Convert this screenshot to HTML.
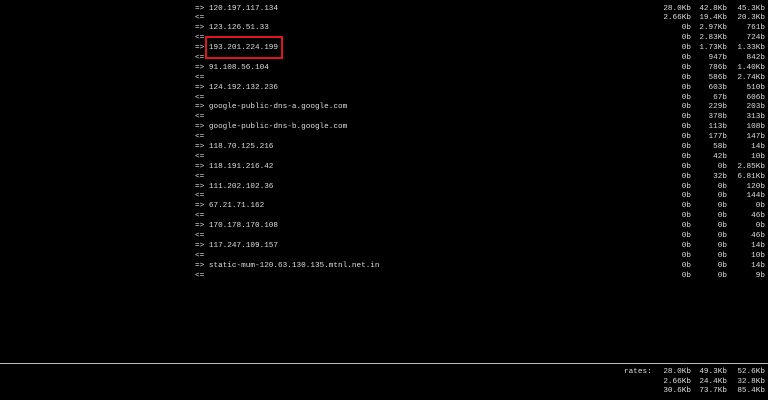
<!DOCTYPE html><html><head><style>
body{margin:0;width:768px;height:400px;background:#000;overflow:hidden;font-family:"Liberation Mono",monospace;font-size:7.7px;color:#dcdcdc;position:relative}
.r{position:absolute;left:0;width:768px;height:10px;line-height:10px;white-space:pre}
.h{position:absolute;left:195px}
.c{position:absolute;text-align:right;width:40px}
.a{left:651px}.b{left:687px}.d{left:725px}
</style></head><body>
<div id="x"></div>
<div style="position:absolute;left:0;top:363px;width:768px;height:1px;background:#bbb"></div>
<div style="position:absolute;left:205px;top:36px;width:74px;height:19px;border:2px solid #e0141c"></div>
<div class="r" style="top:367px"><span class="h" style="left:624px">rates:</span><span class="c a">28.0Kb</span><span class="c b">49.3Kb</span><span class="c d">52.6Kb</span></div>
<div class="r" style="top:377px"><span class="c a">2.66Kb</span><span class="c b">24.4Kb</span><span class="c d">32.8Kb</span></div>
<div class="r" style="top:386px"><span class="c a">30.6Kb</span><span class="c b">73.7Kb</span><span class="c d">85.4Kb</span></div>
<script>
var d=[["=> 120.197.117.134","28.0Kb","42.8Kb","45.3Kb"],["<=","2.66Kb","19.4Kb","20.3Kb"],
["=> 123.126.51.33","0b","2.97Kb","761b"],["<=","0b","2.83Kb","724b"],
["=> 193.201.224.199","0b","1.73Kb","1.33Kb"],["<=","0b","947b","842b"],
["=> 91.108.56.104","0b","786b","1.40Kb"],["<=","0b","586b","2.74Kb"],
["=> 124.192.132.236","0b","603b","510b"],["<=","0b","67b","606b"],
["=> google-public-dns-a.google.com","0b","229b","203b"],["<=","0b","378b","313b"],
["=> google-public-dns-b.google.com","0b","113b","108b"],["<=","0b","177b","147b"],
["=> 118.70.125.216","0b","58b","14b"],["<=","0b","42b","10b"],
["=> 118.191.216.42","0b","0b","2.85Kb"],["<=","0b","32b","6.81Kb"],
["=> 111.202.102.36","0b","0b","120b"],["<=","0b","0b","144b"],
["=> 67.21.71.162","0b","0b","0b"],["<=","0b","0b","46b"],
["=> 170.178.170.108","0b","0b","0b"],["<=","0b","0b","46b"],
["=> 117.247.109.157","0b","0b","14b"],["<=","0b","0b","10b"],
["=> static-mum-120.63.130.135.mtnl.net.in","0b","0b","14b"],["<=","0b","0b","9b"]];
var h="";d.forEach(function(r,i){h+='<div class="r" style="top:'+(3.5+i*9.89)+'px"><span class="h">'+r[0].replace(/</g,"&lt;").replace(/>/g,"&gt;")+'</span><span class="c a">'+r[1]+'</span><span class="c b">'+r[2]+'</span><span class="c d">'+r[3]+'</span></div>'});
document.getElementById("x").innerHTML=h;
</script>
</body></html>
